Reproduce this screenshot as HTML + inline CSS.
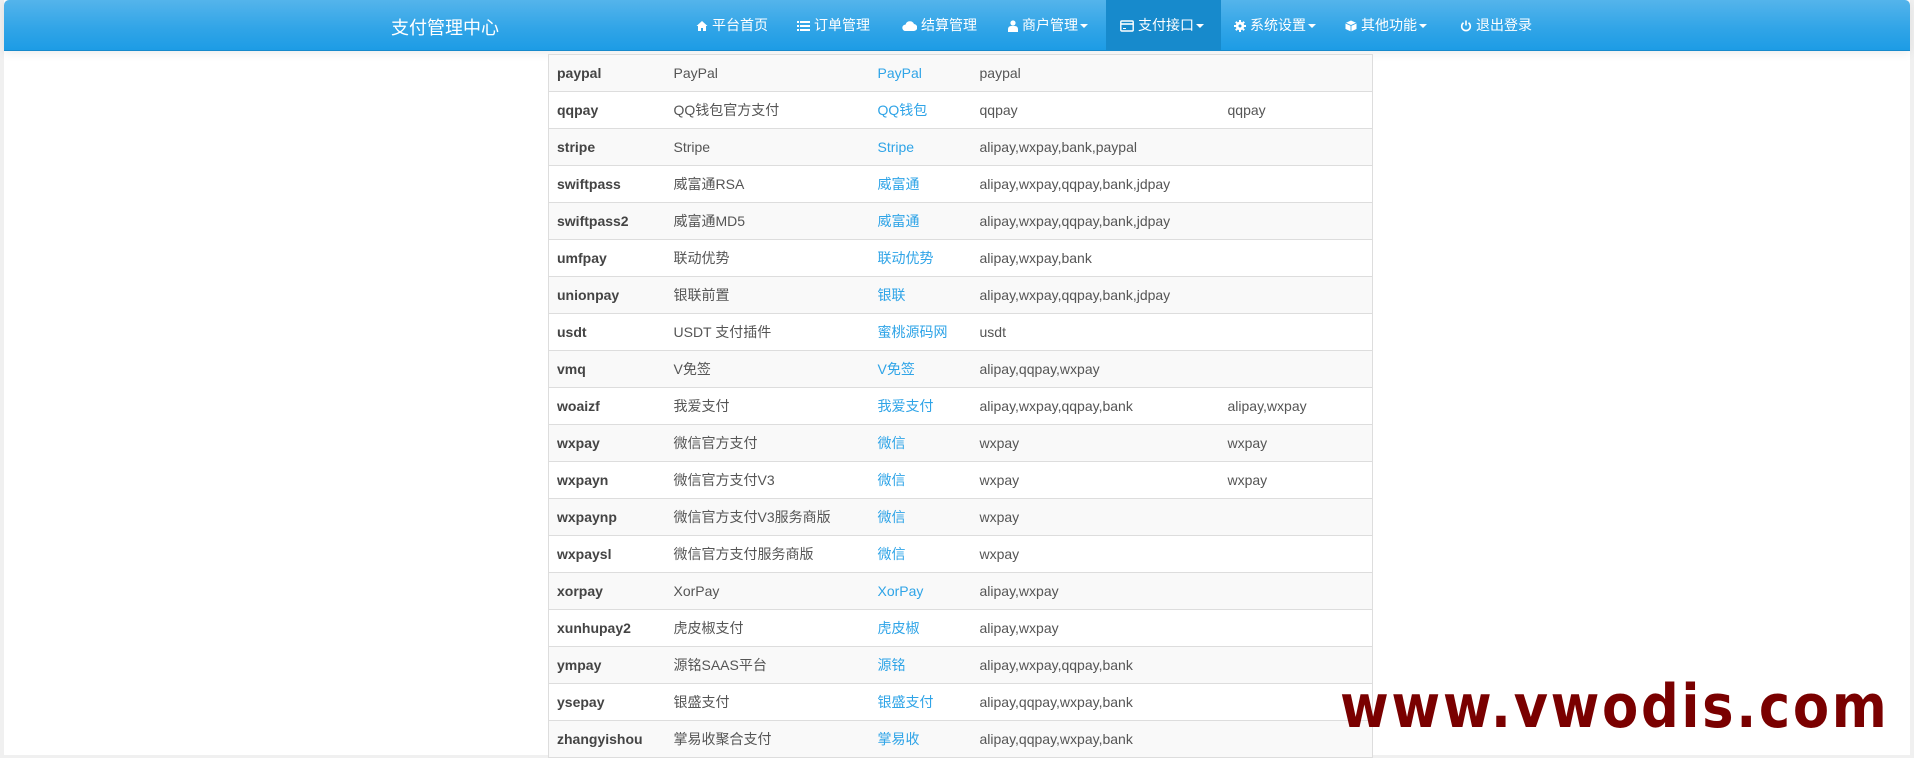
<!DOCTYPE html>
<html><head><meta charset="utf-8"><style>
*{margin:0;padding:0;box-sizing:border-box}
body{width:1914px;height:755px;overflow:hidden;background:#f0f0f0;font-family:"Liberation Sans","Noto Sans CJK SC",sans-serif;font-size:14px;color:#555;position:relative}
.page{position:absolute;left:4px;right:4px;top:0;bottom:0;background:#fff}
.nav{position:absolute;left:4px;right:4px;top:0;height:51px;border-radius:5px 5px 0 0;background:linear-gradient(#54b4eb,#2fa4e7 60%,#1d9ce5);border-bottom:1px solid #178acc;box-shadow:0 2px 10px rgba(0,0,0,.08);color:#fff}
.brand{position:absolute;left:387px;top:14px;font-size:18px}
.it{position:absolute;top:0;height:50px;line-height:50px;font-size:14px;white-space:nowrap}
.it svg{vertical-align:-2px;margin-right:4px}
.act{background:#178acc}
.caret{display:inline-block;border-top:4px solid #fff;border-left:4px solid transparent;border-right:4px solid transparent;vertical-align:2px;margin-left:2px}
table{position:absolute;left:548px;top:54px;width:825px;border-collapse:collapse;border:1px solid #ddd}
td{height:37px;border-top:1px solid #ddd;padding:0 8px;white-space:nowrap;color:#555}
tr:nth-child(odd) td{background:#f9f9f9}
td:first-child{font-weight:bold;color:#444}
td.l{color:#2fa4e7}
.wm{position:absolute;left:1340px;top:672px;font-family:"DejaVu Sans",sans-serif;font-weight:bold;font-size:60px;line-height:70px;color:#7a0000;letter-spacing:3px;transform:scaleX(0.88);transform-origin:left;white-space:nowrap}
</style></head><body>
<div class="page"></div>
<div class="nav">
<div class="brand">支付管理中心</div>
<div class="it" style="left:692px"><svg width="12" height="12" viewBox="0 0 12 12"><path d="M6 1L0.5 6h1.5v5h3V8h2v3h3V6h1.5z" fill="#fff"/></svg>平台首页</div>
<div class="it" style="left:793px"><svg width="13" height="12" viewBox="0 0 13 12"><path d="M0 1h2v2H0zM3 1h10v2H3zM0 5h2v2H0zM3 5h10v2H3zM0 9h2v2H0zM3 9h10v2H3z" fill="#fff"/></svg>订单管理</div>
<div class="it" style="left:898px"><svg width="15" height="12" viewBox="0 0 15 12"><path d="M3.5 11a3.2 3.2 0 010-6.4A4.5 4.5 0 0112 4a3.5 3.5 0 01-.5 7z" fill="#fff"/></svg>结算管理</div>
<div class="it" style="left:1004px"><svg width="10" height="12" viewBox="0 0 10 12"><circle cx="5" cy="3" r="2.6" fill="#fff"/><path d="M0 12v-3a3 3 0 013-3h4a3 3 0 013 3v3z" fill="#fff"/></svg>商户管理<span class="caret"></span></div>
<div class="it act" style="left:1102px;width:115px;padding-left:14px"><svg width="14" height="12" viewBox="0 0 14 12"><rect x="0.8" y="1" width="12.4" height="10" rx="1" fill="none" stroke="#fff" stroke-width="1.4"/><path d="M1 4h12" stroke="#fff" stroke-width="1.6"/><path d="M3 8.5h3" stroke="#fff"/></svg>支付接口<span class="caret"></span></div>
<div class="it" style="left:1230px"><svg width="12" height="12" viewBox="0 0 12 12"><circle cx="6" cy="6" r="4.2" fill="#fff"/><path d="M6 0v12M0 6h12M1.8 1.8l8.4 8.4M10.2 1.8l-8.4 8.4" stroke="#fff" stroke-width="2"/><circle cx="6" cy="6" r="1.5" fill="#2aa0e6"/></svg>系统设置<span class="caret"></span></div>
<div class="it" style="left:1341px"><svg width="12" height="12" viewBox="0 0 12 12"><path d="M6 .5l5.5 2.5v6L6 11.5 .5 9V3z" fill="#fff"/><path d="M.5 3L6 5.5 11.5 3M6 5.5v6" stroke="#2aa0e6" stroke-width=".8" fill="none"/></svg>其他功能<span class="caret"></span></div>
<div class="it" style="left:1456px"><svg width="12" height="12" viewBox="0 0 12 12"><path d="M3.5 2.8a4.3 4.3 0 105 0" fill="none" stroke="#fff" stroke-width="1.6"/><path d="M6 .5v5" stroke="#fff" stroke-width="1.6"/></svg>退出登录</div>
</div>
<table>
<colgroup><col style="width:117px"><col style="width:204px"><col style="width:102px"><col style="width:248px"><col></colgroup>
<tr><td>paypal</td><td>PayPal</td><td class="l">PayPal</td><td>paypal</td><td></td></tr>
<tr><td>qqpay</td><td>QQ钱包官方支付</td><td class="l">QQ钱包</td><td>qqpay</td><td>qqpay</td></tr>
<tr><td>stripe</td><td>Stripe</td><td class="l">Stripe</td><td>alipay,wxpay,bank,paypal</td><td></td></tr>
<tr><td>swiftpass</td><td>威富通RSA</td><td class="l">威富通</td><td>alipay,wxpay,qqpay,bank,jdpay</td><td></td></tr>
<tr><td>swiftpass2</td><td>威富通MD5</td><td class="l">威富通</td><td>alipay,wxpay,qqpay,bank,jdpay</td><td></td></tr>
<tr><td>umfpay</td><td>联动优势</td><td class="l">联动优势</td><td>alipay,wxpay,bank</td><td></td></tr>
<tr><td>unionpay</td><td>银联前置</td><td class="l">银联</td><td>alipay,wxpay,qqpay,bank,jdpay</td><td></td></tr>
<tr><td>usdt</td><td>USDT 支付插件</td><td class="l">蜜桃源码网</td><td>usdt</td><td></td></tr>
<tr><td>vmq</td><td>V免签</td><td class="l">V免签</td><td>alipay,qqpay,wxpay</td><td></td></tr>
<tr><td>woaizf</td><td>我爱支付</td><td class="l">我爱支付</td><td>alipay,wxpay,qqpay,bank</td><td>alipay,wxpay</td></tr>
<tr><td>wxpay</td><td>微信官方支付</td><td class="l">微信</td><td>wxpay</td><td>wxpay</td></tr>
<tr><td>wxpayn</td><td>微信官方支付V3</td><td class="l">微信</td><td>wxpay</td><td>wxpay</td></tr>
<tr><td>wxpaynp</td><td>微信官方支付V3服务商版</td><td class="l">微信</td><td>wxpay</td><td></td></tr>
<tr><td>wxpaysl</td><td>微信官方支付服务商版</td><td class="l">微信</td><td>wxpay</td><td></td></tr>
<tr><td>xorpay</td><td>XorPay</td><td class="l">XorPay</td><td>alipay,wxpay</td><td></td></tr>
<tr><td>xunhupay2</td><td>虎皮椒支付</td><td class="l">虎皮椒</td><td>alipay,wxpay</td><td></td></tr>
<tr><td>ympay</td><td>源铭SAAS平台</td><td class="l">源铭</td><td>alipay,wxpay,qqpay,bank</td><td></td></tr>
<tr><td>ysepay</td><td>银盛支付</td><td class="l">银盛支付</td><td>alipay,qqpay,wxpay,bank</td><td></td></tr>
<tr><td>zhangyishou</td><td>掌易收聚合支付</td><td class="l">掌易收</td><td>alipay,qqpay,wxpay,bank</td><td></td></tr>
</table>
<div class="wm">www.vwodis.com</div>
</body></html>
